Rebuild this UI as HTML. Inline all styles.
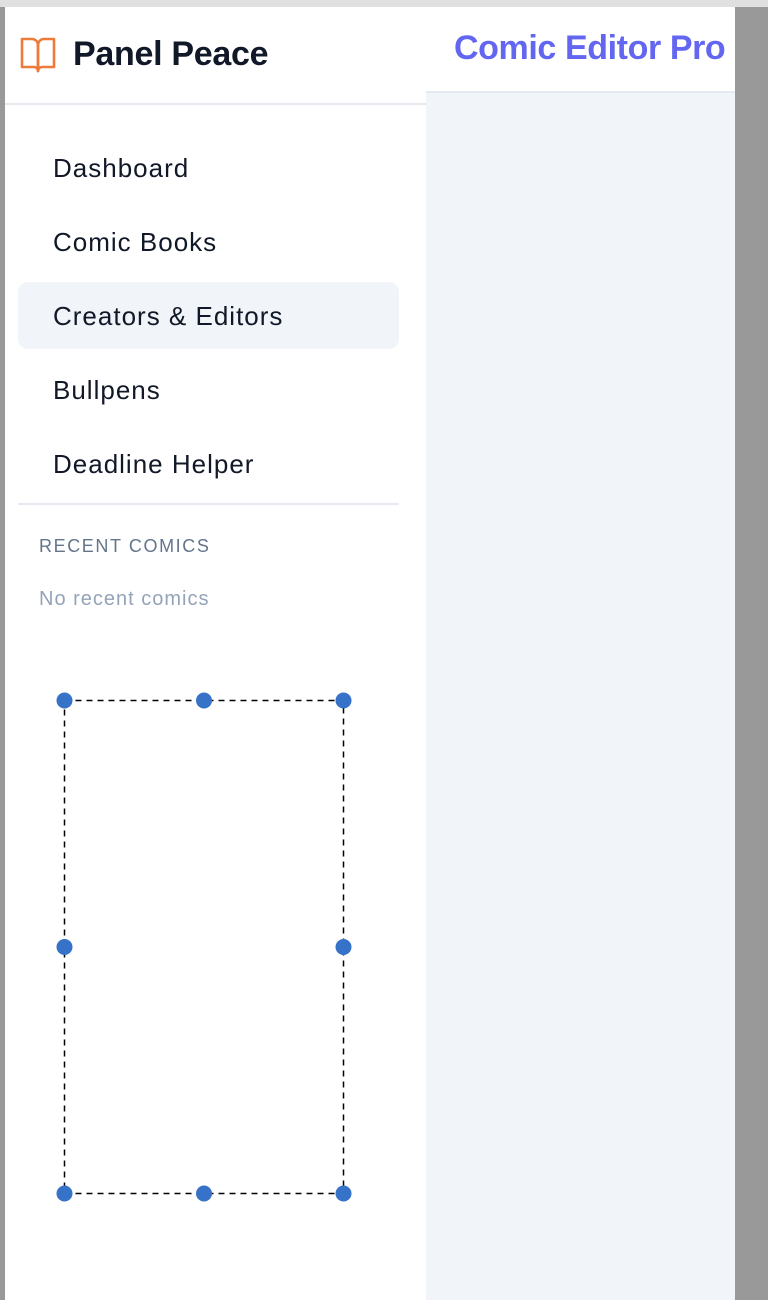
<!DOCTYPE html>
<html><head><meta charset="utf-8"><style>
*{margin:0;padding:0;box-sizing:border-box}
body{width:768px;height:1300px;background:#999;position:relative;overflow:hidden;font-family:"Liberation Sans",Helvetica,Arial,sans-serif}
.top{position:absolute;left:0;top:0;width:768px;height:7px;background:#e0e0e0}
.side{position:absolute;left:5px;top:7px;width:421px;height:1293px;background:#fff}
.main{position:absolute;left:426px;top:7px;width:309px;height:1293px;background:#f1f4f9}
.mh{position:absolute;left:0;top:0;width:309px;height:86px;background:#fff;border-bottom:2px solid #e5e9f0}
.mh span{position:absolute;left:28px;top:22px;font-size:34px;font-weight:bold;color:#6366f1;white-space:nowrap;letter-spacing:-0.4px}
.sh{position:absolute;left:0;top:0;width:421px;height:98px;border-bottom:2px solid #e5e9f0}
.logo{position:absolute;left:68px;top:28px;font-size:34px;font-weight:bold;color:#111827;letter-spacing:-0.3px}
.nav{position:absolute;left:48px;font-size:26px;color:#111827;letter-spacing:1px}
.act{position:absolute;left:13px;top:275px;width:381px;height:67px;background:#f1f4f9;border-radius:10px}
.div{position:absolute;left:13px;top:496px;width:381px;height:2px;background:#e5e9f0}
.rc{position:absolute;left:34px;top:529px;font-size:18px;color:#64748b;letter-spacing:1.6px}
.nr{position:absolute;left:34px;top:581px;font-size:20px;color:#94a3b8;letter-spacing:1px}
</style></head><body>
<div class="top"></div>
<div class="side">
<div class="sh">
<svg style="position:absolute;left:14px;top:28px" width="38" height="40" viewBox="0 0 38 40" fill="none" stroke="#ed7b3a" stroke-width="2.6" stroke-linejoin="round"><path d="M3 4h10a6 6 0 0 1 6 6v26a4 4 0 0 0-4-4H3z"/><path d="M35 4H25a6 6 0 0 0-6 6v26a4 4 0 0 1 4-4h12z"/></svg>
<div class="logo">Panel Peace</div>
</div>
<div class="act"></div>
<div class="nav" style="top:146px">Dashboard</div>
<div class="nav" style="top:220px">Comic Books</div>
<div class="nav" style="top:294px">Creators &amp; Editors</div>
<div class="nav" style="top:368px">Bullpens</div>
<div class="nav" style="top:442px">Deadline Helper</div>
<div class="div"></div>
<div class="rc">RECENT COMICS</div>
<div class="nr">No recent comics</div>
<svg style="position:absolute;left:0;top:0" width="421" height="1293">
<rect x="59.5" y="693.5" width="279" height="493" fill="none" stroke="#000" stroke-width="1.5" stroke-dasharray="6,5"/>
<g fill="#3672c8">
<circle cx="59.5" cy="693.5" r="8"/><circle cx="199" cy="693.5" r="8"/><circle cx="338.5" cy="693.5" r="8"/>
<circle cx="59.5" cy="940" r="8"/><circle cx="338.5" cy="940" r="8"/>
<circle cx="59.5" cy="1186.5" r="8"/><circle cx="199" cy="1186.5" r="8"/><circle cx="338.5" cy="1186.5" r="8"/>
</g></svg>
</div>
<div class="main"><div class="mh"><span>Comic Editor Pro</span></div></div>
</body></html>
